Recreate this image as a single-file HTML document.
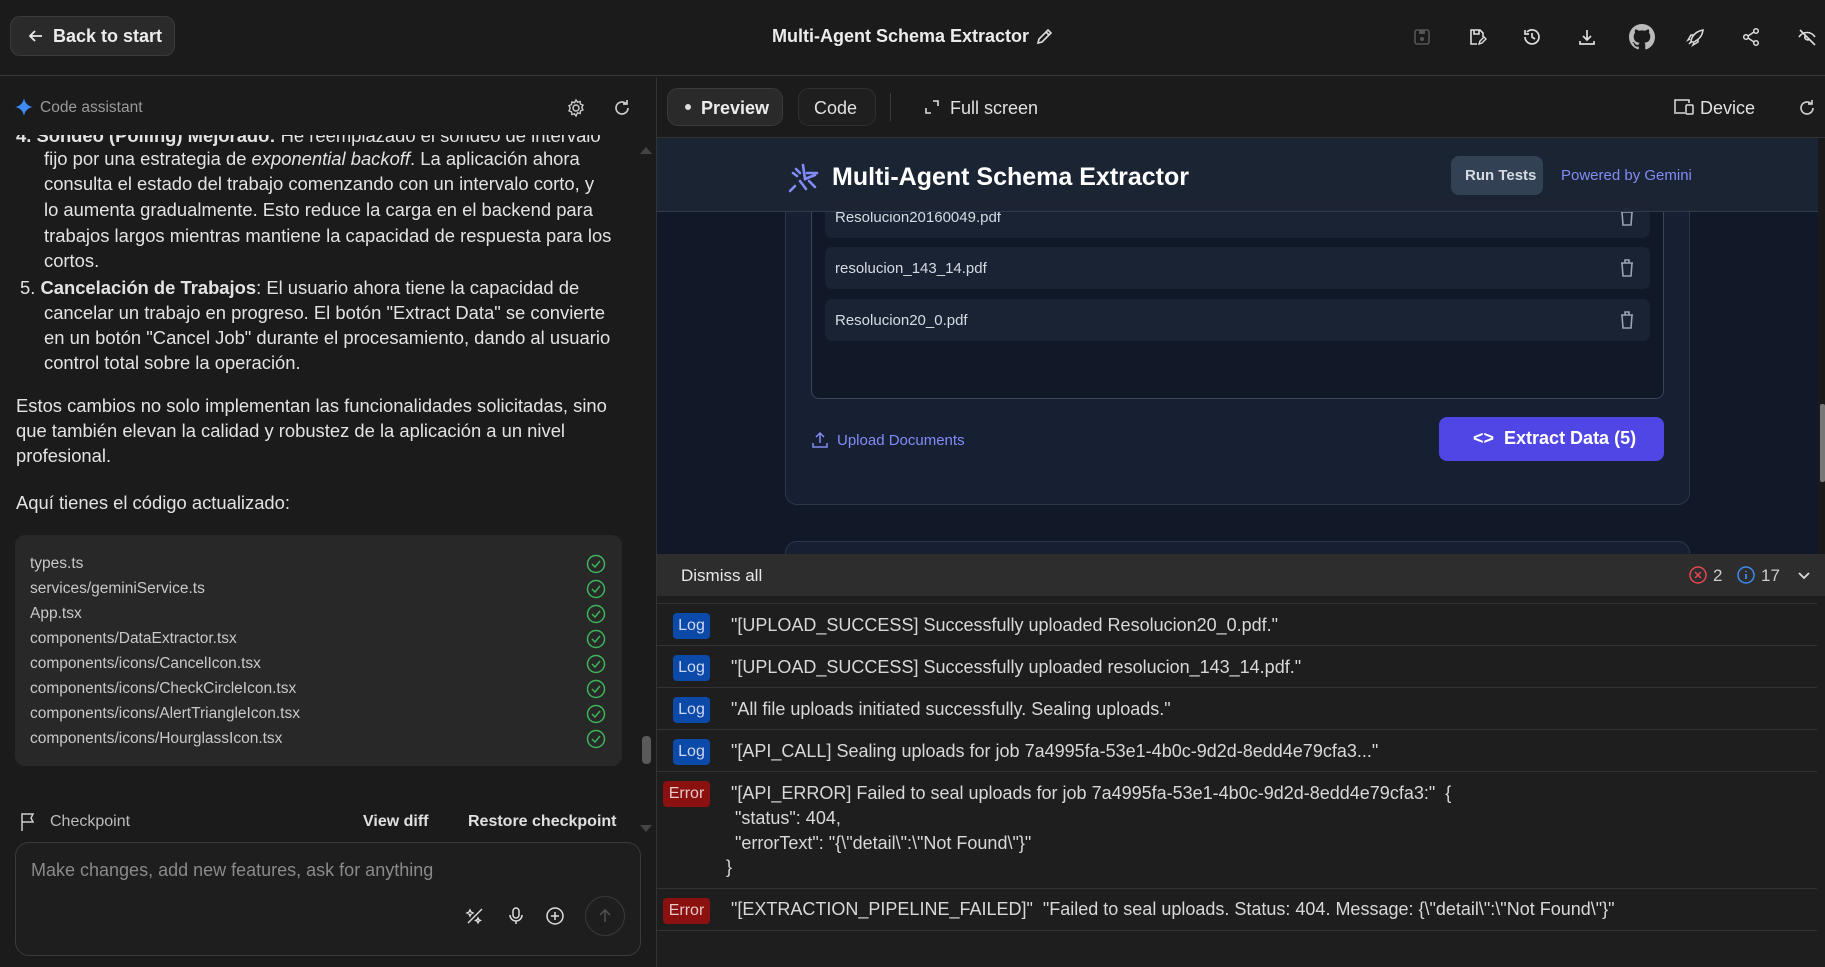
<!DOCTYPE html>
<html><head><meta charset="utf-8"><style>
*{margin:0;padding:0;box-sizing:border-box}
body{width:1825px;height:967px;background:#1b1b1b;font-family:"Liberation Sans",Arial,sans-serif;color:#e3e3e3;position:relative;overflow:hidden}
.a{position:absolute;white-space:nowrap}
svg{position:absolute}
.ln{position:absolute;white-space:nowrap;font-size:18.4px;line-height:26px;color:#e3e3e3}
.f{position:absolute;left:15px;font-size:15.5px;color:#c8c8c8;white-space:nowrap}
.ck{position:absolute;left:587px}
.row{position:absolute;left:825px;width:825px;height:42px;background:#1a2333;border-radius:7px}
.row span{position:absolute;left:10px;top:13px;font-size:15px;color:#d6dbe3}
.row svg{right:14px;top:11px}
.log{position:absolute;left:657px;width:1160px;border-bottom:1px solid #333}
.bd{position:absolute;font-size:16px;color:#d0d8f0;border-radius:4px;text-align:center;line-height:26px;height:26px}
.lt{position:absolute;left:731px;font-size:18px;color:#d8d8d8;white-space:nowrap}
</style></head><body>

<!-- top bar -->
<div class="a" style="left:0;top:0;width:1825px;height:76px;background:#1b1b1b;border-bottom:1px solid #3a3a3a"></div>
<div class="a" style="left:10px;top:16px;width:165px;height:40px;border:1px solid #3a3a3a;background:#2a2a2a;border-radius:10px"></div>
<svg style="left:27px;top:27px" width="18" height="18" viewBox="0 0 18 18"><path d="M15 9H3M8 4L3 9l5 5" stroke="#e8e8e8" stroke-width="1.8" fill="none"/></svg>
<div class="a" style="left:53px;top:26px;font-size:18px;font-weight:bold;color:#ececec">Back to start</div>
<div class="a" style="left:772px;top:26px;font-size:18px;font-weight:bold;color:#ececec">Multi-Agent Schema Extractor</div>
<svg style="left:1034px;top:27px" width="20" height="20" viewBox="0 0 20 20"><path d="M4 16l1-4 9-9 3 3-9 9zM12 5l3 3" stroke="#ddd" stroke-width="1.6" fill="none"/></svg>
<!-- right icons -->
<svg style="left:1412px;top:27px" width="20" height="20" viewBox="0 0 20 20"><rect x="3" y="3" width="14" height="14" rx="2" stroke="#555" stroke-width="1.6" fill="none"/><rect x="7" y="3" width="6" height="4" fill="#555"/><circle cx="10" cy="12" r="2" fill="#555"/></svg>
<svg style="left:1467px;top:27px" width="20" height="20" viewBox="0 0 20 20"><path d="M10 17H4V3h9l3 3v4M7 3v4h5V3" stroke="#ddd" stroke-width="1.6" fill="none"/><path d="M12 17l1-3 4-4 2 2-4 4z" stroke="#ddd" stroke-width="1.4" fill="none"/></svg>
<svg style="left:1522px;top:27px" width="20" height="20" viewBox="0 0 20 20"><path d="M3 10a7 7 0 1 0 2-5M3 3v4h4M10 6v4l3 2" stroke="#ddd" stroke-width="1.7" fill="none"/></svg>
<svg style="left:1577px;top:27px" width="20" height="20" viewBox="0 0 20 20"><path d="M10 3v10M6 9l4 4 4-4M3 14v3h14v-3" stroke="#ddd" stroke-width="1.7" fill="none"/></svg>
<svg style="left:1629px;top:24px" width="26" height="26" viewBox="0 0 16 16"><path fill="#bbb" d="M8 0C3.58 0 0 3.58 0 8c0 3.540 2.29 6.53 5.47 7.59.4.07.55-.17.55-.38v-1.33c-2.23.48-2.7-1.070-2.7-1.07-.36-.92-.89-1.17-.89-1.17-.73-.5.06-.49.06-.49.8.06 1.23.83 1.23.83.71 1.22 1.87.87 2.33.66.07-.52.28-.87.51-1.07-1.78-.2-3.65-.89-3.65-3.95 0-.87.31-1.59.82-2.15-.08-.2-.36-1.02.08-2.12 0 0 .67-.21 2.2.82a7.6 7.6 0 0 1 4 0c1.53-1.04 2.2-.82 2.2-.82.44 1.1.16 1.92.08 2.12.51.56.82 1.27.82 2.15 0 3.07-1.87 3.75-3.65 3.95.29.25.54.73.54 1.48v2.2c0 .21.15.46.55.38A8 8 0 0 0 16 8c0-4.42-3.58-8-8-8z"/></svg>
<svg style="left:1686px;top:27px" width="20" height="20" viewBox="0 0 20 20"><path d="M5 15c0-3 2-10 12-12-1 8-6 10-9 12zM4 12l-2 1 3-5 3 0M8 16l-1 2 5-3 0-3M3 17l3-3" stroke="#ddd" stroke-width="1.5" fill="none"/></svg>
<svg style="left:1741px;top:27px" width="20" height="20" viewBox="0 0 20 20"><circle cx="15" cy="4" r="2.3" stroke="#ddd" stroke-width="1.5" fill="none"/><circle cx="5" cy="10" r="2.3" stroke="#ddd" stroke-width="1.5" fill="none"/><circle cx="15" cy="16" r="2.3" stroke="#ddd" stroke-width="1.5" fill="none"/><path d="M7 9l6-4M7 11l6 4" stroke="#ddd" stroke-width="1.5"/></svg>
<svg style="left:1797px;top:27px" width="22" height="20" viewBox="0 0 22 20"><path d="M2 10c4-6 12-6 16 0M8 9a3 3 0 0 0 5 3M3 3l15 15" stroke="#ddd" stroke-width="1.6" fill="none"/></svg>

<!-- left panel -->
<div class="a" style="left:656px;top:77px;width:1px;height:890px;background:#333"></div>
<svg style="left:15px;top:98px" width="18" height="18" viewBox="0 0 18 18"><path d="M9 0C9.8 5 13 8.2 18 9 13 9.8 9.8 13 9 18 8.2 13 5 9.8 0 9 5 8.2 8.2 5 9 0z" fill="#3d8bf2"/></svg>
<div class="a" style="left:40px;top:99px;font-size:15.5px;color:#9a9a9a">Code assistant</div>
<svg style="left:566px;top:98px" width="20" height="20" viewBox="0 0 20 20"><circle cx="10" cy="10" r="3" stroke="#ccc" stroke-width="1.5" fill="none"/><path d="M10 2l1.5 2.2 2.6-.7.4 2.6 2.5 1-1.2 2.4 1.2 2.4-2.5 1-.4 2.6-2.6-.7L10 18l-1.5-2.2-2.6.7-.4-2.6-2.5-1L4.2 10 3 7.6l2.5-1 .4-2.6 2.6.7z" stroke="#ccc" stroke-width="1.4" fill="none"/></svg>
<svg style="left:612px;top:98px" width="20" height="20" viewBox="0 0 20 20"><path d="M16 10a6 6 0 1 1-2-4.5M15 2v4h-4" stroke="#ccc" stroke-width="1.7" fill="none"/></svg>

<div class="a" style="left:0;top:135px;width:656px;height:640px;overflow:hidden">
 <div class="ln" style="left:16px;top:-12px"><b>4. Sondeo (Polling) Mejorado:</b> He reemplazado el sondeo de intervalo</div>
 <div class="ln" style="left:44px;top:11px">fijo por una estrategia de <i>exponential backoff</i>. La aplicación ahora</div>
 <div class="ln" style="left:44px;top:36px">consulta el estado del trabajo comenzando con un intervalo corto, y</div>
 <div class="ln" style="left:44px;top:62px">lo aumenta gradualmente. Esto reduce la carga en el backend para</div>
 <div class="ln" style="left:44px;top:88px">trabajos largos mientras mantiene la capacidad de respuesta para los</div>
 <div class="ln" style="left:44px;top:113px">cortos.</div>
 <div class="ln" style="left:20px;top:140px">5. <b>Cancelación de Trabajos</b>: El usuario ahora tiene la capacidad de</div>
 <div class="ln" style="left:44px;top:165px">cancelar un trabajo en progreso. El botón "Extract Data" se convierte</div>
 <div class="ln" style="left:44px;top:190px">en un botón "Cancel Job" durante el procesamiento, dando al usuario</div>
 <div class="ln" style="left:44px;top:215px">control total sobre la operación.</div>
 <div class="ln" style="left:16px;top:258px">Estos cambios no solo implementan las funcionalidades solicitadas, sino</div>
 <div class="ln" style="left:16px;top:283px">que también elevan la calidad y robustez de la aplicación a un nivel</div>
 <div class="ln" style="left:16px;top:308px">profesional.</div>
 <div class="ln" style="left:16px;top:355px">Aquí tienes el código actualizado:</div>
 <div class="a" style="left:15px;top:400px;width:607px;height:231px;background:#282828;border-radius:10px">
  <div class="f" style="top:20px">types.ts</div>
  <div class="f" style="top:45px">services/geminiService.ts</div>
  <div class="f" style="top:70px">App.tsx</div>
  <div class="f" style="top:95px">components/DataExtractor.tsx</div>
  <div class="f" style="top:120px">components/icons/CancelIcon.tsx</div>
  <div class="f" style="top:145px">components/icons/CheckCircleIcon.tsx</div>
  <div class="f" style="top:170px">components/icons/AlertTriangleIcon.tsx</div>
  <div class="f" style="top:195px">components/icons/HourglassIcon.tsx</div>
 </div>
</div>
<svg style="left:586px;top:554px" width="20" height="200" viewBox="0 0 20 200">
 <g stroke="#3cb55a" stroke-width="1.5" fill="none">
 <circle cx="10" cy="10" r="8.5"/><path d="M6 10l3 3 5-6"/>
 <circle cx="10" cy="35" r="8.5"/><path d="M6 35l3 3 5-6"/>
 <circle cx="10" cy="60" r="8.5"/><path d="M6 60l3 3 5-6"/>
 <circle cx="10" cy="85" r="8.5"/><path d="M6 85l3 3 5-6"/>
 <circle cx="10" cy="110" r="8.5"/><path d="M6 110l3 3 5-6"/>
 <circle cx="10" cy="135" r="8.5"/><path d="M6 135l3 3 5-6"/>
 <circle cx="10" cy="160" r="8.5"/><path d="M6 160l3 3 5-6"/>
 <circle cx="10" cy="185" r="8.5"/><path d="M6 185l3 3 5-6"/>
 </g></svg>
<div class="a" style="left:642px;top:736px;width:9px;height:28px;background:#5a5a5a;border-radius:4px"></div>
<svg style="left:639px;top:145px" width="14" height="10"><path d="M1 9L7 2l6 7z" fill="#444"/></svg>
<svg style="left:639px;top:824px" width="14" height="10"><path d="M1 1L7 8l6-7z" fill="#444"/></svg>

<svg style="left:19px;top:812px" width="18" height="20" viewBox="0 0 18 20"><path d="M3 19V2h11l-2 4 2 4H3" stroke="#ccc" stroke-width="1.5" fill="none"/></svg>
<div class="a" style="left:50px;top:813px;font-size:16px;color:#bbb">Checkpoint</div>
<div class="a" style="left:363px;top:813px;font-size:16px;font-weight:bold;color:#e0e0e0">View diff</div>
<div class="a" style="left:468px;top:813px;font-size:16px;font-weight:bold;color:#e0e0e0">Restore checkpoint</div>

<div class="a" style="left:15px;top:842px;width:626px;height:114px;border:1px solid #3a3a3a;border-radius:14px;background:#1e1e1e"></div>
<div class="a" style="left:31px;top:860px;font-size:18px;color:#8a8a8a">Make changes, add new features, ask for anything</div>
<svg style="left:465px;top:906px" width="20" height="20" viewBox="0 0 20 20"><path d="M3 17L17 3M5 4l1 2 2 1-2 1-1 2-1-2-2-1 2-1zM13 12l.8 1.6 1.6.8-1.6.8-.8 1.6-.8-1.6-1.6-.8 1.6-.8z" stroke="#ddd" stroke-width="1.4" fill="none"/></svg>
<svg style="left:506px;top:906px" width="20" height="20" viewBox="0 0 20 20"><rect x="7" y="2" width="6" height="10" rx="3" stroke="#ddd" stroke-width="1.5" fill="none"/><path d="M4 9a6 6 0 0 0 12 0M10 15v3" stroke="#ddd" stroke-width="1.5" fill="none"/></svg>
<svg style="left:545px;top:906px" width="20" height="20" viewBox="0 0 20 20"><circle cx="10" cy="10" r="8" stroke="#ddd" stroke-width="1.5" fill="none"/><path d="M10 6v8M6 10h8" stroke="#ddd" stroke-width="1.5"/></svg>
<div class="a" style="left:585px;top:896px;width:40px;height:40px;border:1px solid #3a3a3a;border-radius:20px"></div>
<svg style="left:598px;top:908px" width="14" height="16" viewBox="0 0 14 16"><path d="M7 14V2M2 7l5-5 5 5" stroke="#555" stroke-width="1.4" fill="none"/></svg>

<!-- right toolbar -->
<div class="a" style="left:667px;top:88px;width:116px;height:38px;background:#2a2a2a;border:1px solid #3a3a3a;border-radius:11px"></div>
<div class="a" style="left:685px;top:104px;width:6px;height:6px;border-radius:3px;background:#ddd"></div>
<div class="a" style="left:701px;top:98px;font-size:18px;font-weight:bold;color:#ececec">Preview</div>
<div class="a" style="left:798px;top:88px;width:78px;height:38px;background:#1f1f1f;border:1px solid #2f2f2f;border-radius:11px"></div>
<div class="a" style="left:814px;top:98px;font-size:18px;color:#e0e0e0">Code</div>
<div class="a" style="left:890px;top:93px;width:1px;height:28px;background:#3a3a3a"></div>
<svg style="left:925px;top:100px" width="14" height="14" viewBox="0 0 14 14"><path d="M1 8v5h5M13 6V1H8" stroke="#ddd" stroke-width="1.6" fill="none"/></svg>
<div class="a" style="left:950px;top:98px;font-size:18px;color:#e0e0e0">Full screen</div>
<svg style="left:1673px;top:98px" width="22" height="18" viewBox="0 0 22 18"><path d="M2 14V2h14v3M1 15h11" stroke="#ddd" stroke-width="1.5" fill="none"/><rect x="13" y="7" width="7" height="9" rx="1" stroke="#ddd" stroke-width="1.5" fill="none"/></svg>
<div class="a" style="left:1700px;top:98px;font-size:18px;color:#e0e0e0">Device</div>
<svg style="left:1797px;top:98px" width="20" height="20" viewBox="0 0 20 20"><path d="M16 10a6 6 0 1 1-2-4.5M15 2v4h-4" stroke="#ccc" stroke-width="1.7" fill="none"/></svg>
<div class="a" style="left:657px;top:137px;width:1168px;height:1px;background:#333"></div>

<!-- preview -->
<div class="a" style="left:657px;top:138px;width:1161px;height:416px;background:#111827;overflow:hidden">
 <div class="a" style="left:128px;top:-60px;width:905px;height:427px;background:#172032;border:1px solid #2c3648;border-radius:12px"></div>
 <div class="a" style="left:154px;top:-20px;width:853px;height:281px;background:#111827;border:1px solid #3a4558;border-radius:8px"></div>
 <div class="row" style="left:168px;top:58px"><span>Resolucion20160049.pdf</span>
  <svg width="18" height="20" viewBox="0 0 18 20"><path d="M3 5h12M7 5V2h4v3M4 5l1 13h8l1-13" stroke="#9aa3b2" stroke-width="1.6" fill="none"/></svg></div>
 <div class="row" style="left:168px;top:109px"><span>resolucion_143_14.pdf</span>
  <svg width="18" height="20" viewBox="0 0 18 20"><path d="M3 5h12M7 5V2h4v3M4 5l1 13h8l1-13" stroke="#9aa3b2" stroke-width="1.6" fill="none"/></svg></div>
 <div class="row" style="left:168px;top:161px"><span>Resolucion20_0.pdf</span>
  <svg width="18" height="20" viewBox="0 0 18 20"><path d="M3 5h12M7 5V2h4v3M4 5l1 13h8l1-13" stroke="#9aa3b2" stroke-width="1.6" fill="none"/></svg></div>
 <svg style="left:154px;top:293px" width="18" height="18" viewBox="0 0 18 18"><path d="M9 12V2M5 6l4-4 4 4M2 12v4h14v-4" stroke="#818cf8" stroke-width="1.5" fill="none"/></svg>
 <div class="a" style="left:180px;top:294px;font-size:15px;color:#818cf8">Upload Documents</div>
 <div class="a" style="left:782px;top:279px;width:225px;height:44px;background:#4f46e5;border-radius:8px"></div>
 <div class="a" style="left:816px;top:290px;font-size:18px;font-weight:bold;color:#fff">&lt;&gt;&nbsp; Extract Data (5)</div>
 <div class="a" style="left:128px;top:403px;width:905px;height:60px;border:1px solid #2c3648;border-radius:12px;background:#172032"></div>
 <!-- header -->
 <div class="a" style="left:0;top:0;width:1161px;height:74px;background:rgba(28,36,51,0.96);border-bottom:1px solid #2f3a4c"></div>
 <svg style="left:130px;top:23px" width="36" height="36" viewBox="0 0 36 36"><g stroke="#818cf8" stroke-width="2.6" fill="none" stroke-linecap="round"><path d="M3 30l5-5M9 8l4 4M6 12l4 3M16 4l2 14 10-4M13 20l6 8M22 20l6 6M20 12l10 0"/></g></svg>
 <div class="a" style="left:175px;top:25px;font-size:25px;font-weight:bold;color:#fff">Multi-Agent Schema Extractor</div>
 <div class="a" style="left:794px;top:18px;width:92px;height:39px;background:#334155;border-radius:8px"></div>
 <div class="a" style="left:808px;top:29px;font-size:15px;font-weight:bold;color:#d6dbe3">Run Tests</div>
 <div class="a" style="left:904px;top:29px;font-size:15px;color:#818cf8">Powered by Gemini</div>
</div>
<div class="a" style="left:1818px;top:138px;width:7px;height:416px;background:#1a1a1a"></div>
<div class="a" style="left:1820px;top:404px;width:5px;height:78px;background:#777;border-radius:2px"></div>

<!-- console -->
<div class="a" style="left:657px;top:554px;width:1168px;height:42px;background:#2d2d2d"></div>
<div class="a" style="left:681px;top:566px;font-size:17px;color:#e8e8e8">Dismiss all</div>
<svg style="left:1688px;top:565px" width="20" height="20" viewBox="0 0 20 20"><circle cx="10" cy="10" r="8" stroke="#e5484d" stroke-width="1.5" fill="none"/><path d="M7 7l6 6M13 7l-6 6" stroke="#e5484d" stroke-width="1.5"/></svg>
<div class="a" style="left:1713px;top:566px;font-size:17px;color:#ccc">2</div>
<svg style="left:1736px;top:565px" width="20" height="20" viewBox="0 0 20 20"><circle cx="10" cy="10" r="8" stroke="#3d8bf2" stroke-width="1.5" fill="none"/><path d="M10 9v5M10 6v1" stroke="#3d8bf2" stroke-width="1.8"/></svg>
<div class="a" style="left:1761px;top:566px;font-size:17px;color:#ccc">17</div>
<svg style="left:1798px;top:571px" width="12" height="10" viewBox="0 0 12 10"><path d="M1 2l5 5 5-5" stroke="#ddd" stroke-width="1.8" fill="none"/></svg>
<div class="a" style="left:657px;top:596px;width:1168px;height:371px;background:#1e1e1e"></div>
<div class="log" style="top:596px;height:8px"></div>
<div class="log" style="top:604px;height:42px"></div>
<div class="log" style="top:646px;height:42px"></div>
<div class="log" style="top:688px;height:42px"></div>
<div class="log" style="top:730px;height:42px"></div>
<div class="log" style="top:772px;height:117px"></div>
<div class="log" style="top:889px;height:42px"></div>
<div class="bd" style="left:673px;top:613px;width:37px;background:#0b4aa8">Log</div>
<div class="bd" style="left:673px;top:655px;width:37px;background:#0b4aa8">Log</div>
<div class="bd" style="left:673px;top:697px;width:37px;background:#0b4aa8">Log</div>
<div class="bd" style="left:673px;top:739px;width:37px;background:#0b4aa8">Log</div>
<div class="bd" style="left:663px;top:781px;width:47px;background:#8b1111;color:#e8c8c8">Error</div>
<div class="bd" style="left:663px;top:898px;width:47px;background:#8b1111;color:#e8c8c8">Error</div>
<div class="lt" style="top:615px">"[UPLOAD_SUCCESS] Successfully uploaded Resolucion20_0.pdf."</div>
<div class="lt" style="top:657px">"[UPLOAD_SUCCESS] Successfully uploaded resolucion_143_14.pdf."</div>
<div class="lt" style="top:699px">"All file uploads initiated successfully. Sealing uploads."</div>
<div class="lt" style="top:741px">"[API_CALL] Sealing uploads for job 7a4995fa-53e1-4b0c-9d2d-8edd4e79cfa3..."</div>
<div class="lt" style="top:783px">"[API_ERROR] Failed to seal uploads for job 7a4995fa-53e1-4b0c-9d2d-8edd4e79cfa3:"&nbsp; {</div>
<div class="lt" style="top:808px;left:735px">"status": 404,</div>
<div class="lt" style="top:833px;left:735px">"errorText": "{\"detail\":\"Not Found\"}"</div>
<div class="lt" style="top:857px;left:726px">}</div>
<div class="lt" style="top:899px">"[EXTRACTION_PIPELINE_FAILED]"&nbsp; "Failed to seal uploads. Status: 404. Message: {\"detail\":\"Not Found\"}"</div>
</body></html>
